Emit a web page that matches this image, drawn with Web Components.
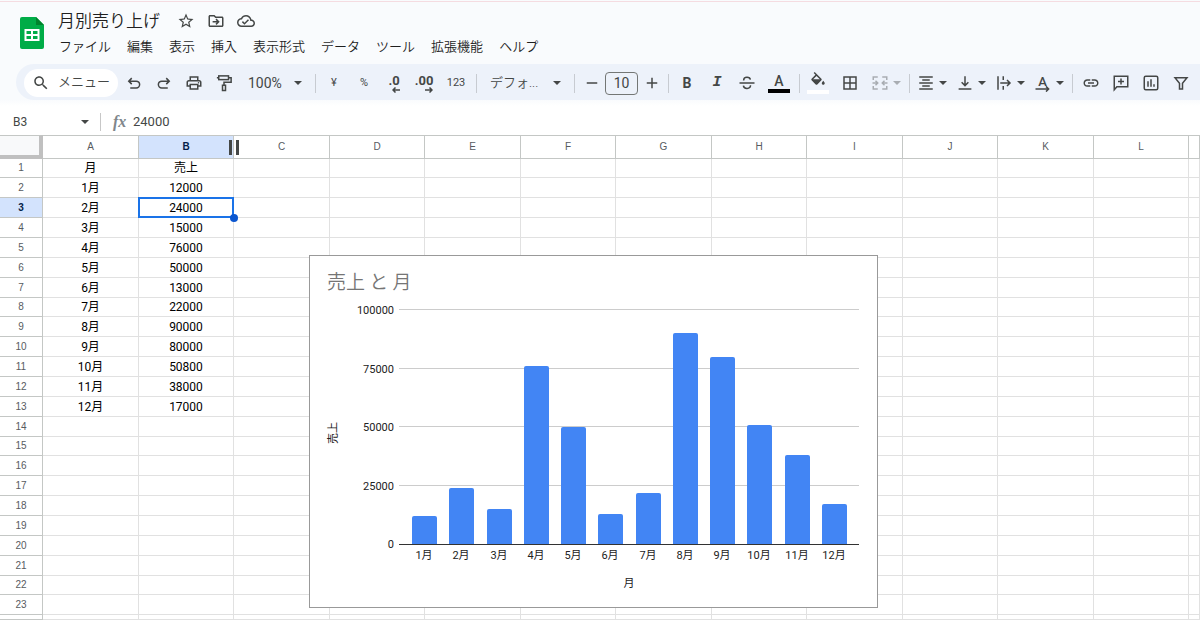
<!DOCTYPE html>
<html lang="ja">
<head>
<meta charset="utf-8">
<meta name="viewport" content="width=device-width, initial-scale=1">
<title>月別売り上げ</title>
<style>
html, body { height: 100%; }
body {
  margin: 0;
  overflow: hidden;
  background: #fff;
  color: #1f1f1f;
  font-family: Roboto, "Noto Sans CJK JP", sans-serif;
  font-size: 13px;
}
</style>
</head>
<body>
<sheet-app></sheet-app>
<script>
const fillIcon = d => `<path fill="currentColor" d="${d}"/>`;
const lineIcon = (inner, w = 2) => `<g fill="none" stroke="currentColor" stroke-width="${w}">${inner}</g>`;

const ICONS = {
  star: fillIcon('M22 9.24l-7.19-.62L12 2 9.19 8.63 2 9.24l5.46 4.73L5.82 21 12 17.27 18.18 21l-1.63-7.03L22 9.24zM12 15.4l-3.76 2.27 1-4.28-3.32-2.88 4.38-.38L12 6.1l1.71 4.04 4.38.38-3.32 2.88 1 4.28L12 15.4z'),
  move: fillIcon('M20 6h-8l-2-2H4c-1.1 0-2 .9-2 2v12c0 1.1.9 2 2 2h16c1.1 0 2-.9 2-2V8c0-1.1-.9-2-2-2zm0 12H4V6h5.17l2 2H20v10z') + lineIcon('<path d="M7.5 13H15M12 9.5l3.5 3.5-3.500 3.5"/>'),
  cloud: fillIcon('M19.35 10.04C18.67 6.59 15.64 4 12 4 9.11 4 6.6 5.64 5.35 8.04 2.34 8.36 0 10.91 0 14c0 3.31 2.69 6 6 6h13c2.76 0 5-2.24 5-5 0-2.64-2.05-4.78-4.65-4.96zM19 18H6c-2.21 0-4-1.79-4-4 0-2.05 1.53-3.76 3.56-3.97l1.07-.11.5-.95C8.08 7.14 9.94 6 12 6c2.62 0 4.88 1.86 5.39 4.43l.3 1.5 1.53.11c1.56.1 2.78 1.41 2.78 2.96 0 1.65-1.35 3-3 3zm-9-3.82l-2.09-2.09L6.5 13.5 10 17l6.01-6.01-1.41-1.41z'),
  search: fillIcon('M15.5 14h-.79l-.28-.27C15.41 12.59 16 11.11 16 9.5 16 5.91 13.09 3 9.5 3S3 5.91 3 9.5 5.91 16 9.5 16c1.61 0 3.09-.59 4.23-1.57l.27.28v.79l5 4.99L20.49 19l-4.99-5zm-6 0C7.01 14 5 11.99 5 9.5S7.01 5 9.5 5 14 7.01 14 9.5 11.99 14 9.5 14z'),
  undo: lineIcon('<path d="M9 5.500 5 9.500l4 4M5.500 9.500H15a4.500 4.500 0 0 1 0 9H7"/>'),
  redo: lineIcon('<path d="M15 5.500l4 4-4 4M18.500 9.500H9a4.500 4.500 0 0 0 0 9h8"/>'),
  print: fillIcon('M19 8h-1V3H6v5H5c-1.66 0-3 1.34-3 3v6h4v4h12v-4h4v-6c0-1.66-1.34-3-3-3zM8 5h8v3H8V5zm8 12v2H8v-4h8v2zm2-2v-2H6v2H4v-4c0-.55.45-1 1-1h14c.55 0 1 .45 1 1v4h-2z') + '<circle cx="18" cy="11.500" r="1" fill="currentColor"/>',
  paint: lineIcon('<rect x="5" y="2.500" width="13" height="5"/><path d="M5 5H2.500M18 5h3.500v6H12v4"/><rect x="10" y="15" width="4" height="7"/>'),
  minus: lineIcon('<path d="M5 12h14"/>'),
  plus: lineIcon('<path d="M5 12h14M12 5v14"/>'),
  strike: lineIcon('<path d="M2 12h20M7.500 8.500c0-5.500 8.500-5 9-1M7.200 15.500c.500 5 9.500 5 9.500-.5"/>'),
  fill: fillIcon('M16.56 8.94L7.62 0 6.21 1.41l2.38 2.38-5.15 5.15c-.59.59-.59 1.54 0 2.12l5.5 5.5c.29.29.68.44 1.06.44s.77-.15 1.06-.44l5.5-5.5c.59-.58.59-1.53 0-2.12zM5.21 10L10 5.21 14.79 10H5.21zM19 11.5s-2 2.17-2 3.5c0 1.1.9 2 2 2s2-.9 2-2c0-1.33-2-3.5-2-3.5z') + '<path fill="currentColor" d="M4 10h12l-6 6z"/>',
  borders: fillIcon('M3 3v18h18V3H3zm8 16H5v-6h6v6zm0-8H5V5h6v6zm8 8h-6v-6h6v6zm0-8h-6V5h6v6z'),
  merge: lineIcon('<path d="M9 4H3v4M15 4h6v4M9 20H3v-4M15 20h6v-4M2 12h7M6 9l3 3-3 3M22 12h-7M18 9l-3 3 3 3"/>'),
  align: fillIcon('M7 15v2h10v-2H7zm-4 6h18v-2H3v2zm0-8h18v-2H3v2zm4-6v2h10V7H7zM3 3v2h18V3H3z'),
  valign: lineIcon('<path d="M12 3v12M7.500 11l4.500 4.500 4.500-4.500M3.500 20h17"/>'),
  wrap: lineIcon('<path d="M4 3v18M11 3v5M11 16v5M7 12h13M16 8l4 4-4 4"/>'),
  turn: lineIcon('<path d="M2 20h17M16 16.500l3.500 3.500-3.500 3.500"/>'),
  link: fillIcon('M3.900 12c0-1.710 1.390-3.100 3.100-3.100h4V7H7c-2.760 0-5 2.240-5 5s2.240 5 5 5h4v-1.900H7c-1.710 0-3.100-1.390-3.100-3.100zM8 13h8v-2H8v2zm9-6h-4v1.900h4c1.710 0 3.100 1.390 3.100 3.100s-1.390 3.100-3.100 3.100h-4V17h4c2.760 0 5-2.240 5-5s-2.240-5-5-5z'),
  comment: lineIcon('<path d="M3 21V3h18v14H6.500zM12 6v8M8 10h8"/>'),
  chart: lineIcon('<rect x="3" y="3" width="18" height="18" rx="2"/><path d="M8 9.500V17M12 7v10M16 13.500V17"/>'),
  filter: lineIcon('<path d="M4 5h16l-6 7.500V20h-4v-7.500z"/>'),
  arrow: '<path fill="currentColor" d="M4 8h16l-8 8z"/>',
  logo: '<path fill="#00ac47" d="M2 0h14l8 8v22a2 2 0 0 1-2 2H2a2 2 0 0 1-2-2V2a2 2 0 0 1 2-2z"/><path fill="#00832d" d="M16 0l8 8h-8z"/><path fill="#fff" fill-rule="evenodd" d="M4.500 12h15v12h-15zM6.500 14v3h4.500v-3zM13 14v3h4.500v-3zM6.500 19v3h4.500v-3zM13 19v3h4.500v-3z"/>'
};

function define(name, html, setup) {
  const template = document.createElement('template');
  template.innerHTML = html;
  customElements.define(name, class extends HTMLElement {
    connectedCallback() {
      if (this.shadowRoot) return;
      const root = this.attachShadow({ mode: 'open' });
      root.append(template.content.cloneNode(true));
      if (setup) setup(this, root);
    }
  });
}

define('ui-icon', `
<style>
:host { display: block; flex: none; width: var(--icon-width, 18px); height: var(--icon-height, 18px); }
svg { display: block; width: 100%; height: 100%; }
</style>
<svg aria-hidden="true"></svg>`, (host, root) => {
  const name = host.getAttribute('name');
  const svg = root.querySelector('svg');
  svg.setAttribute('viewBox', name === 'logo' ? '0 0 24 32' : '0 0 24 24');
  svg.innerHTML = ICONS[name];
});

define('tool-button', `
<style>
:host { display: block; flex: none; width: 30px; color: #444746; }
:host([size="narrow"]) { width: 27px; }
:host([size="wide"]) { width: 34px; }
:host([menu]) { width: 39px; }
:host([disabled]) { color: #a9adb2; }
button {
  display: flex; align-items: center; justify-content: center; gap: 2px;
  width: 100%; height: 28px; padding: 0; border: 0; border-radius: 4px;
  background: none; color: inherit; font: 400 11px/16px Roboto, sans-serif;
}
button:hover { background: #dde3ea; }
:host([menu]) ui-icon.arrow { --icon-width: 12px; --icon-height: 12px; }
ui-icon.arrow { display: none; }
:host([menu]) ui-icon.arrow { display: block; }
</style>
<button type="button"><slot></slot><ui-icon class="arrow" name="arrow"></ui-icon></button>`, (host, root) => {
  const button = root.querySelector('button');
  button.setAttribute('aria-label', host.getAttribute('label'));
  button.disabled = host.hasAttribute('disabled');
});

define('tool-select', `
<style>
:host { display: grid; flex: none; align-items: center; width: 73px; color: #444746; }
:host([size="wide"]) { width: 91px; }
select, ui-icon { grid-area: 1 / 1; }
select {
  appearance: none; width: 100%; height: 28px; margin: 0; padding: 0 20px 0 9px;
  border: 0; background: none; color: inherit;
  font: 14px/20px Roboto, "Noto Sans CJK JP", sans-serif;
}
:host([size="wide"]) select { padding-left: 10px; font-size: 13px; font-weight: 350; }
ui-icon { --icon-width: 12px; --icon-height: 12px; justify-self: end; margin-right: 8px; pointer-events: none; }
</style>
<select><option></option></select><ui-icon name="arrow"></ui-icon>`, (host, root) => {
  const select = root.querySelector('select');
  select.setAttribute('aria-label', host.getAttribute('label'));
  select.options[0].textContent = host.getAttribute('value');
});

define('sheet-header', `
<style>
:host { display: flex; align-items: flex-start; gap: 14px; height: 56px; padding: 6px 20px 0; border-top: 1px solid #f5dce1; }
.logo { --icon-width: 24px; --icon-height: 32px; margin-top: 9px; }
.title { display: flex; align-items: center; height: 26px; color: #444746; }
h1 { margin: 0 11px 2px 0; color: #1f1f1f; font: 350 17px/24px "Noto Sans CJK JP", sans-serif; }
nav { display: flex; gap: 16px; padding-left: 1px; }
nav button { padding: 0; border: 0; background: none; color: #1f1f1f; font: 350 13px/24px "Noto Sans CJK JP", sans-serif; white-space: nowrap; }
</style>
<ui-icon class="logo" name="logo"></ui-icon>
<div>
  <div class="title">
    <h1>月別売り上げ</h1>
    <tool-button label="スターを付ける"><ui-icon name="star"></ui-icon></tool-button>
    <tool-button label="移動"><ui-icon name="move"></ui-icon></tool-button>
    <tool-button label="保存状況"><ui-icon name="cloud"></ui-icon></tool-button>
  </div>
  <nav>
    <button type="button">ファイル</button><button type="button">編集</button><button type="button">表示</button>
    <button type="button">挿入</button><button type="button">表示形式</button><button type="button">データ</button>
    <button type="button">ツール</button><button type="button">拡張機能</button><button type="button">ヘルプ</button>
  </nav>
</div>`);

define('sheet-toolbar', `
<style>
:host {
  display: flex; align-items: center; box-sizing: border-box; height: 36px; margin-left: 16px; padding: 2px 0 0 8px;
  border-radius: 18px 0 0 18px; background: #edf2fa; overflow: hidden;
}
.search { display: flex; align-items: center; gap: 8px; flex: none; width: 94px; height: 28px; margin-right: 1px; padding-left: 8px; box-sizing: border-box; border-radius: 14px; background: #fff; color: #444746; }
.search input { width: 58px; padding: 0 0 4px; border: 0; outline: 0; background: none; font: 350 13px/20px "Noto Sans CJK JP", sans-serif; }
.search input::placeholder { color: #444746; opacity: 1; }
hr { flex: none; width: 1px; height: 19px; margin: 0 3px; border: 0; background: #c7cbd1; }
.size { flex: none; width: 33px; height: 23px; box-sizing: border-box; padding: 0; border: 1px solid #747775; border-radius: 4px; background: none; color: #444746; text-align: center; font: 14px/20px Roboto, sans-serif; }
b { font: 700 14px/20px Roboto, sans-serif; }
i { font: italic 700 15px/20px "Liberation Mono", monospace; }
.stack { display: grid; justify-items: center; gap: 0; }
.stack b { font-weight: 500; line-height: 16px; }
.bar { width: 22px; height: 4px; background: #000; }
.bar.white { background: #fff; }
.decimal { display: grid; font: 700 13px/13px Roboto, sans-serif; }
.decimal svg { display: block; width: 8px; height: 6px; justify-self: end; }
.turn { display: grid; place-items: center; }
.turn > * { grid-area: 1 / 1; }
.turn span { padding-bottom: 3px; font: 500 13px/15px Roboto, sans-serif; }
</style>
<label class="search"><ui-icon name="search"></ui-icon><input type="text" placeholder="メニュー" aria-label="メニュー"></label>
<tool-button label="元に戻す"><ui-icon name="undo"></ui-icon></tool-button>
<tool-button label="やり直す"><ui-icon name="redo"></ui-icon></tool-button>
<tool-button label="印刷"><ui-icon name="print"></ui-icon></tool-button>
<tool-button label="書式を貼り付け"><ui-icon name="paint"></ui-icon></tool-button>
<tool-select label="ズーム" value="100%"></tool-select>
<hr>
<tool-button label="通貨の表示形式">¥</tool-button>
<tool-button label="パーセント表示">%</tool-button>
<tool-button label="小数点以下の桁数を減らす"><span class="decimal">.0<svg viewBox="0 0 8 6"><path d="M8 3H1M3.500 .500 1 3l2.500 2.500" fill="none" stroke="currentColor" stroke-width="1.500"/></svg></span></tool-button>
<tool-button label="小数点以下の桁数を増やす"><span class="decimal">.00<svg viewBox="0 0 8 6"><path d="M0 3h7M4.500 .500 7 3 4.500 5.500" fill="none" stroke="currentColor" stroke-width="1.500"/></svg></span></tool-button>
<tool-button size="wide" label="表示形式の詳細設定">123</tool-button>
<hr>
<tool-select size="wide" label="フォント" value="デフォ..."></tool-select>
<hr>
<tool-button size="narrow" label="フォントサイズを縮小"><ui-icon name="minus"></ui-icon></tool-button>
<input class="size" type="text" value="10" aria-label="フォントサイズ">
<tool-button size="narrow" label="フォントサイズを拡大"><ui-icon name="plus"></ui-icon></tool-button>
<hr>
<tool-button label="太字"><b>B</b></tool-button>
<tool-button label="斜体"><i>I</i></tool-button>
<tool-button label="取り消し線"><ui-icon name="strike"></ui-icon></tool-button>
<tool-button size="wide" label="テキストの色"><span class="stack"><b>A</b><span class="bar"></span></span></tool-button>
<hr>
<tool-button label="塗りつぶしの色"><span class="stack"><ui-icon name="fill"></ui-icon><span class="bar white"></span></span></tool-button>
<tool-button size="wide" label="枠線"><ui-icon name="borders"></ui-icon></tool-button>
<tool-button menu disabled label="セルを結合"><ui-icon name="merge"></ui-icon></tool-button>
<hr>
<tool-button menu label="水平方向の配置"><ui-icon name="align"></ui-icon></tool-button>
<tool-button menu label="垂直方向の配置"><ui-icon name="valign"></ui-icon></tool-button>
<tool-button menu label="テキストを折り返す"><ui-icon name="wrap"></ui-icon></tool-button>
<tool-button menu label="テキストの回転"><span class="turn"><span>A</span><ui-icon name="turn"></ui-icon></span></tool-button>
<hr>
<tool-button label="リンクを挿入"><ui-icon name="link"></ui-icon></tool-button>
<tool-button label="コメントを挿入"><ui-icon name="comment"></ui-icon></tool-button>
<tool-button label="グラフを挿入"><ui-icon name="chart"></ui-icon></tool-button>
<tool-button label="フィルタを作成"><ui-icon name="filter"></ui-icon></tool-button>`);

define('formula-bar', `
<style>
:host { display: flex; align-items: center; height: 27px; padding: 2px 0 0 13px; background: #fff; color: #444746; }
input { min-width: 0; padding: 0; border: 0; outline: 0; background: none; color: inherit; font: 13px/20px Roboto, sans-serif; }
.name { width: 66px; font-size: 12px; }
button { display: flex; padding: 0; border: 0; background: none; color: inherit; }
button ui-icon { --icon-width: 12px; --icon-height: 12px; }
hr { width: 1px; height: 18px; margin: 0 12px 0 9px; border: 0; background: #c7c7c7; }
em { width: 20px; color: #80868b; font: italic 700 16px/20px "Liberation Serif", serif; }
.formula { flex: 1; }
</style>
<input class="name" type="text" value="B3" aria-label="名前ボックス">
<button type="button" aria-label="名前付き範囲"><ui-icon name="arrow"></ui-icon></button>
<hr>
<em>fx</em>
<input class="formula" type="text" value="24000" aria-label="数式">`);

const SALES = [12000, 24000, 15000, 76000, 50000, 13000, 22000, 90000, 80000, 50800, 38000, 17000];

define('data-grid', `
<style>
:host { display: block; }
table { width: 100%; height: 100%; table-layout: fixed; border-spacing: 0; color: #000; font: 12px/16px Roboto, "Noto Sans CJK JP", sans-serif; }
col.rows { width: 43px; }
col.odd { width: 96px; }
col.even { width: 95px; }
th, td { box-sizing: border-box; padding: 0; border: solid #e1e1e1; border-width: 0 1px 1px 0; text-align: center; white-space: nowrap; }
th { border-color: #c4c7c5; color: #575b5f; font-family: "Liberation Sans", sans-serif; font-size: 10px; font-weight: 400; }
thead tr { height: 24px; }
thead th { border-top: 1px solid #c4c7c5; }
tbody tr { height: 20px; }
tbody tr:nth-child(7n - 6) { height: 19px; }
tbody tr:last-child { height: auto; }
.corner { border-right: 4px solid #c0c0c0; border-bottom: 4px solid #c0c0c0; background: #f8f9fa; }
.active { background: #d3e3fd; color: #041e49; font-weight: 700; }
thead .active { position: relative; }
.handle { position: absolute; top: 4px; right: -6px; width: 4px; height: 15px; border: solid #444746; border-width: 0 3px; }
.selected { position: relative; }
.selected::before { content: ""; position: absolute; inset: -1px -1px -1px; border: 2px solid #1a73e8; }
.selected::after { content: ""; position: absolute; right: -5px; bottom: -5px; width: 8px; height: 8px; border-radius: 50%; background: #0b57d0; }
</style>
<table><colgroup></colgroup><thead></thead><tbody></tbody></table>`, (host, root) => {
  const letters = [...'ABCDEFGHIJKL'];
  const data = [['月', '売上'], ...SALES.map((v, i) => [`${i + 1}月`, v])];
  root.querySelector('colgroup').innerHTML =
    '<col class="rows">' + letters.map((_, i) => `<col class="${i % 2 ? 'even' : 'odd'}">`).join('') + '<col>';
  root.querySelector('thead').innerHTML = '<tr><th class="corner"></th>' + letters.map(l =>
    l === 'B' ? '<th scope="col" class="active">B<span class="handle"></span></th>' : `<th scope="col">${l}</th>`).join('') + '<th></th></tr>';
  let rows = '';
  for (let r = 1; r <= 24; r++) {
    const cells = [...letters, ''].map((l, c) =>
      `<td${r === 3 && l === 'B' ? ' class="selected"' : ''}>${data[r - 1]?.[c] ?? ''}</td>`).join('');
    rows += `<tr><th scope="row"${r === 3 ? ' class="active"' : ''}>${r < 24 ? r : ''}</th>${cells}</tr>`;
  }
  root.querySelector('tbody').innerHTML = rows;
});

define('bar-chart', `
<style>
:host { display: block; box-sizing: border-box; width: 569px; border: 1px solid #999; background: #fff; }
svg { display: block; width: 100%; font: 11px Roboto, "Noto Sans CJK JP", sans-serif; fill: #222; }
.title { font: 350 19px "Noto Sans CJK JP", sans-serif; fill: #757575; }
.bar { fill: #4285f4; }
.grid { stroke: #ccc; }
.axis { stroke: #333; }
</style>
<svg viewBox="0 0 567 351" role="img" aria-label="売上 と 月"></svg>`, (host, root) => {
  const left = 89, right = 549, base = 288, top = 54, bar = 25;
  const y = v => base - v / 100000 * (base - top);
  let out = '<text class="title" x="17" y="33">売上 と 月</text>';
  for (const v of [100000, 75000, 50000, 25000, 0]) {
    const gy = Math.round(y(v)) - 0.5;
    if (v) out += `<path class="grid" d="M${left} ${gy}H${right}"/>`;
    out += `<text x="84" y="${Math.round(y(v)) + 4}" text-anchor="end">${v}</text>`;
  }
  const step = 410 / 11;
  SALES.forEach((v, i) => {
    const x = Math.round(102 + i * step), t = Math.round(y(v));
    out += `<path class="bar" d="M${x} ${base}V${t + 2}q0-2 2-2h${bar - 4}q2 0 2 2V${base}z"/>`;
    out += `<text x="${x + 12}" y="303" text-anchor="middle">${i + 1}月</text>`;
  });
  out += `<path class="axis" d="M${left} ${base + 0.5}H${right}"/>`;
  out += '<text x="319" y="331" text-anchor="middle">月</text>';
  out += '<text transform="translate(27 177) rotate(-90)" text-anchor="middle">売上</text>';
  root.querySelector('svg').innerHTML = out;
});

define('sheet-app', `
<style>
:host { display: flex; flex-direction: column; height: 100vh; }
header { flex: none; padding: 1px 0 6px; background: linear-gradient(#f9fbfd 94%, #fff); }
formula-bar { flex: none; }
main { position: relative; flex: 1; min-height: 0; overflow: hidden; }
data-grid { height: 100%; }
/* The chart floats over the cells, where the user has dragged it. */
bar-chart { position: absolute; left: 309px; top: 120px; }
</style>
<header>
  <sheet-header></sheet-header>
  <sheet-toolbar></sheet-toolbar>
</header>
<formula-bar></formula-bar>
<main>
  <data-grid></data-grid>
  <bar-chart></bar-chart>
</main>`);
</script>
</body>
</html>
